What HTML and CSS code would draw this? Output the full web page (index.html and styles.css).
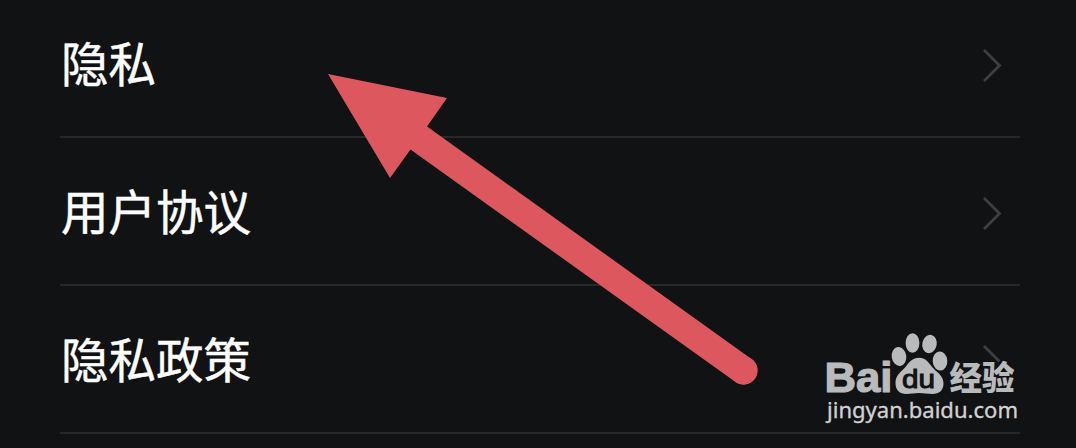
FILE: index.html
```html
<!DOCTYPE html>
<html lang="zh-CN">
<head>
    <meta charset="UTF-8">
    <meta name="viewport" content="width=device-width, initial-scale=1.0">
    <title>隐私</title>
    <link rel="stylesheet" href="styles.css">
</head>
<body>
    <div class="screen">
        <ul class="settings">
            <li class="row">
                <span class="label">隐私</span>
                <svg class="chevron" viewBox="0 0 20 34"><path d="M2 2 L17.500 17.500 L2 33"/></svg>
            </li>
            <li class="row">
                <span class="label">用户协议</span>
                <svg class="chevron" viewBox="0 0 20 34"><path d="M2 2 L17.500 17.500 L2 33"/></svg>
            </li>
            <li class="row">
                <span class="label">隐私政策</span>
                <svg class="chevron" viewBox="0 0 20 34"><path d="M2 2 L17.500 17.500"/></svg>
            </li>
        </ul>

        <!-- pointer to the first row -->
        <svg class="arrow" viewBox="0 0 1076 448">
            <path d="M328 74 L447 98 L427 126.500 L751.500 359 A14 14 0 0 1 735.500 382 L410.500 149.500 L390 178 Z"/>
            <circle cx="743.500" cy="370.500" r="14"/>
        </svg>

        <svg class="watermark" viewBox="810 320 220 128">
            <text class="logo" x="824.500" y="391.500" textLength="68" lengthAdjust="spacingAndGlyphs">Bai</text>
            <g class="paw">
                <ellipse cx="899" cy="356.500" rx="7.300" ry="9.500" transform="rotate(-8 899 356.500)"/>
                <ellipse cx="912.500" cy="343" rx="6.900" ry="9.800"/>
                <ellipse cx="929.500" cy="344" rx="7.200" ry="9.300" transform="rotate(12 929.500 344)"/>
                <ellipse cx="940" cy="361" rx="7.300" ry="9.500" transform="rotate(-5 940 361)"/>
                <path d="M919 357.700 C926.500 357.700 929 363.500 933.500 368.500 C938 373 943.500 376 943.500 383.500 C943.500 390.500 939 394 932.500 394 C927 394 924 393 919 393 C914 393 911 394 906 394 C900 394 895.500 390.500 895.500 383 C895.500 376 900 372.500 904.500 368 C909 363 911.500 357.700 919 357.700 Z"/>
            </g>
            <text class="du" x="902" y="388" textLength="33" lengthAdjust="spacingAndGlyphs">du</text>
            <text class="product" x="949.500" y="389.500" textLength="65" lengthAdjust="spacingAndGlyphs">经验</text>
            <text class="site" x="827" y="418" textLength="191" lengthAdjust="spacingAndGlyphs">jingyan.baidu.com</text>
        </svg>
    </div>
</body>
</html>
```

FILE: styles.css
```css
* {
    margin: 0;
    padding: 0;
    box-sizing: border-box;
}
body {
    background-color: #111214;
    font-family: "Noto Sans CJK SC", sans-serif;
}
.screen {
    position: relative;
    width: 1076px;
    height: 448px;
    overflow: hidden;
}
.settings {
    list-style: none;
    margin-top: -10px;
    padding: 0 56px 0 60px;
}
.row {
    display: flex;
    align-items: center;
    justify-content: space-between;
    height: 148px;
    padding: 3px 18px 0 1px;
    border-bottom: 2px solid #27282a;
}
.label {
    padding-bottom: 5px;
    color: #fff;
    font-size: 47.5px;
    line-height: 70px;
    -webkit-text-stroke: 0.5px #fff;
}
.chevron {
    width: 20px;
    height: 34px;
    overflow: visible;
    fill: none;
    stroke: #3e3f41;
    stroke-width: 2.8;
}
.arrow {
    position: absolute;
    top: 0;
    left: 0;
    width: 1076px;
    height: 448px;
    fill: #dd585e;
}
.watermark {
    position: absolute;
    top: 320px;
    left: 810px;
    width: 220px;
    height: 128px;
    fill: #b9babb;
}
.logo {
    font-family: "Liberation Sans", sans-serif;
    font-size: 43px;
    font-weight: bold;
    stroke: #b9babb;
    stroke-width: 1.2;
}
.du {
    fill: #111214;
    font-family: "Liberation Sans", sans-serif;
    font-size: 26px;
    stroke: #111214;
    stroke-width: 1;
}
.product {
    font-size: 33px;
    font-weight: 900;
}
.site {
    fill: #d0d1d2;
    font-family: "Noto Sans", sans-serif;
    font-size: 22px;
    stroke: #d0d1d2;
    stroke-width: 0.35;
}
```
